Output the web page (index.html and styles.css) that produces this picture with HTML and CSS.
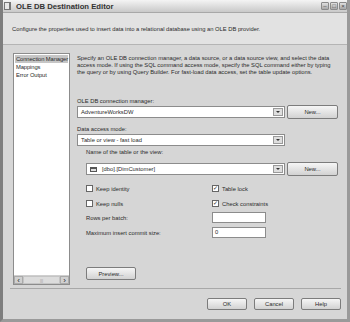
FILE: index.html
```html
<!DOCTYPE html>
<html lang="en">
<head>
    <meta charset="UTF-8">
    <title>OLE DB Destination Editor</title>
    <link rel="stylesheet" href="styles.css">
</head>
<body>
    <div class="window">
        <!-- Title bar -->
        <div class="titlebar">
            <span class="app-icon"></span>
            <span class="title">OLE DB Destination Editor</span>
            <div class="controls">
                <span class="ctl">&#8211;</span>
                <span class="ctl">&#9633;</span>
                <span class="ctl close">&#215;</span>
            </div>
        </div>

        <div class="header">
            <p>Configure the properties used to insert data into a relational database using an OLE DB provider.</p>
        </div>

        <div class="main">
            <!-- Page list -->
            <div class="pages">
                <ul class="page-list">
                    <li class="selected">Connection Manager</li>
                    <li>Mappings</li>
                    <li>Error Output</li>
                </ul>
                <div class="hscroll">
                    <span class="arrow">&#8249;</span>
                    <span class="thumb">|||</span>
                    <span class="arrow">&#8250;</span>
                </div>
            </div>

            <!-- Connection manager page -->
            <div class="content">
                <p class="desc">Specify an OLE DB connection manager, a data source, or a data source view, and select the data<br>access mode. If using the SQL command access mode, specify the SQL command either by typing<br>the query or by using Query Builder. For fast-load data access, set the table update options.</p>

                <div class="label first">OLE DB connection manager:</div>
                <div class="row">
                    <div class="combo">AdventureWorksDW<span class="drop"></span></div>
                    <button class="btn new">New...</button>
                </div>

                <div class="label">Data access mode:</div>
                <div class="combo wide">Table or view - fast load<span class="drop"></span></div>

                <div class="options">
                    <div class="label">Name of the table or the view:</div>
                    <div class="row table-row">
                        <div class="combo"><span class="tbl-icon"></span>[dbo].[DimCustomer]<span class="drop"></span></div>
                        <button class="btn new">New...</button>
                    </div>

                    <div class="checks">
                        <label class="check"><span class="box"></span>Keep identity</label>
                        <label class="check"><span class="box on">&#10003;</span>Table lock</label>
                        <label class="check"><span class="box"></span>Keep nulls</label>
                        <label class="check"><span class="box on">&#10003;</span>Check constraints</label>
                    </div>

                    <div class="field">
                        <span class="field-label">Rows per batch:</span>
                        <span class="textbox"></span>
                    </div>
                    <div class="field">
                        <span class="field-label">Maximum insert commit size:</span>
                        <span class="textbox">0</span>
                    </div>
                </div>

                <button class="btn preview">Preview...</button>
            </div>
        </div>

        <!-- Dialog buttons -->
        <div class="footer">
            <button class="btn">OK</button>
            <button class="btn">Cancel</button>
            <button class="btn">Help</button>
        </div>
    </div>
</body>
</html>
```

FILE: styles.css
```css
* {
    box-sizing: border-box;
}

body {
    margin: 0;
    font-family: 'Liberation Sans', Arial, sans-serif;
    font-size: 5.8px;
    color: #2a2a2a;
    background-color: #ffffff;
}

p {
    margin: 0;
}

.window {
    width: 350px;
    height: 322px;
    display: flex;
    flex-direction: column;
    background-color: #d6d6d6;
    border: 3px solid #9a9a9a;
    border-left-color: #7e7e7e;
    border-top: none;
    overflow: hidden;
}

.titlebar {
    height: 13px;
    margin: 0 -3px;
    display: flex;
    align-items: center;
    padding: 0 3px 0 4px;
    background: linear-gradient(#f4f4f4, #c9c9c9);
    border-bottom: 1px solid #a8a8a8;
}

.app-icon {
    width: 7px;
    height: 8px;
    border: 1px solid #777;
    border-right-width: 2px;
    background-color: #e8e8e8;
    margin-right: 5px;
}

.title {
    font-size: 7.7px;
    font-weight: bold;
    color: #333;
}

.controls {
    margin-left: auto;
    display: flex;
    gap: 1px;
}

.ctl {
    width: 8px;
    height: 8px;
    font-size: 6px;
    line-height: 7px;
    text-align: center;
    background: linear-gradient(#e0e0e0, #a8a8a8);
    border: 1px solid #8a8a8a;
    border-radius: 1px;
    color: #444;
}

.header {
    height: 32px;
    padding: 0 0 0 9px;
    display: flex;
    align-items: center;
    background-color: #e2e2e2;
    border-bottom: 1px solid #b4b4b4;
}

.main {
    flex: 1;
    display: flex;
    padding: 8px 0 0 10px;
}

.pages {
    width: 57px;
    height: 232px;
    display: flex;
    flex-direction: column;
    background-color: #ffffff;
    border: 1px solid #8c8c8c;
}

.page-list {
    flex: 1;
    list-style: none;
    margin: 0;
    padding: 1px;
}

.page-list li {
    height: 8px;
    line-height: 8px;
    padding-left: 1px;
    white-space: nowrap;
    letter-spacing: -0.1px;
}

.page-list .selected {
    background-color: #c6c6c6;
}

.hscroll {
    height: 9px;
    display: flex;
    background-color: #e6e6e6;
    border-top: 1px solid #cfcfcf;
}

.hscroll .arrow {
    width: 9px;
    font-size: 8px;
    line-height: 7px;
    text-align: center;
    background-color: #d0d0d0;
    border: 1px solid #aaa;
}

.hscroll .thumb {
    flex: 1;
    font-size: 4px;
    line-height: 7px;
    text-align: center;
    color: #999;
    background-color: #dcdcdc;
    border: 1px solid #c4c4c4;
}

.content {
    flex: 1;
    padding: 2px 6px 0 7px;
    display: flex;
    flex-direction: column;
}

.desc {
    line-height: 7px;
    height: 21px;
    white-space: nowrap;
}

.label {
    height: 8px;
    line-height: 8px;
    margin-top: 6px;
}

.label.first {
    margin-top: 21px;
}

.row {
    height: 14px;
    display: flex;
    align-items: center;
    gap: 2px;
}

.combo {
    position: relative;
    width: 208px;
    height: 12px;
    line-height: 10px;
    padding-left: 3px;
    background-color: #ffffff;
    border: 1px solid #8c8c8c;
    white-space: nowrap;
}

.combo.wide {
    margin-top: 1px;
}

.drop {
    position: absolute;
    right: 1px;
    top: 1px;
    width: 10px;
    height: 8px;
    background-color: #dedede;
    border: 1px solid #9a9a9a;
}

.drop::after {
    content: '';
    position: absolute;
    left: 2px;
    top: 2px;
    border-left: 2px solid transparent;
    border-right: 2px solid transparent;
    border-top: 2px solid #333;
}

.btn {
    height: 14px;
    padding: 0;
    font-family: inherit;
    font-size: 5.8px;
    color: #2a2a2a;
    background: linear-gradient(#f6f6f6, #d2d2d2);
    border: 1px solid #7c7c7c;
    border-radius: 2px;
}

.btn.new {
    width: 51px;
}

.options {
    padding-left: 9px;
    display: flex;
    flex-direction: column;
}

.options .label {
    margin-top: 2px;
}

.table-row {
    margin-top: 6px;
}

.table-row .combo {
    width: 199px;
    padding-left: 2px;
}

.tbl-icon {
    display: inline-block;
    width: 7px;
    height: 5px;
    margin: 0 5px 0 1px;
    vertical-align: -1px;
    border: 1px solid #555;
    border-top-width: 2px;
    background-color: #e0e0e0;
}

.checks {
    margin-top: 8px;
    display: grid;
    grid-template-columns: 126px auto;
    row-gap: 6px;
}

.check {
    height: 9px;
    display: flex;
    align-items: center;
    white-space: nowrap;
}

.box {
    width: 7px;
    height: 7px;
    margin-right: 3px;
    font-size: 6px;
    line-height: 5px;
    text-align: center;
    background-color: #ffffff;
    border: 1px solid #666;
}

.field {
    height: 11px;
    display: flex;
    align-items: center;
    margin-top: 4px;
}

.field:first-of-type {
    margin-top: 8px;
}

.field-label {
    width: 126px;
}

.textbox {
    width: 54px;
    height: 11px;
    line-height: 9px;
    padding-left: 2px;
    background-color: #ffffff;
    border: 1px solid #8c8c8c;
}

.btn.preview {
    width: 50px;
    height: 13px;
    margin: 29px 0 0 9px;
}

.footer {
    height: 31px;
    margin: 0 6px 0 7px;
    display: flex;
    justify-content: flex-end;
    align-items: flex-start;
    gap: 7px;
    padding-top: 9px;
    border-top: 1px solid #a8a8a8;
}

.footer .btn {
    width: 40px;
    height: 12px;
}
```
